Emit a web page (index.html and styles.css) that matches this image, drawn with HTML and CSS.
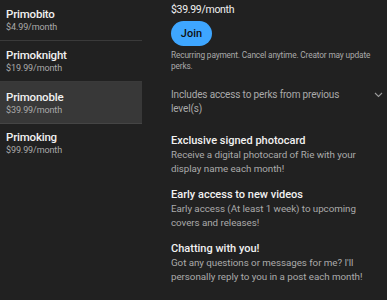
FILE: index.html
```html
<!DOCTYPE html>
<html lang="en">

<head>
	<meta charset="UTF-8">
	<title>Membership levels</title>
	<link rel="stylesheet" href="styles.css">
</head>

<body>
	<div class="page">
		<div class="levels">
			<div class="level">
				<div class="level-name">Primobito</div>
				<div class="level-price">$4.99/month</div>
			</div>
			<div class="level">
				<div class="level-name">Primoknight</div>
				<div class="level-price">$19.99/month</div>
			</div>
			<div class="level selected">
				<div class="level-name">Primonoble</div>
				<div class="level-price">$39.99/month</div>
			</div>
			<div class="level last">
				<div class="level-name">Primoking</div>
				<div class="level-price">$99.99/month</div>
			</div>
		</div>
		<div class="detail">
			<div class="price">$39.99/month</div>
			<button class="join">Join</button>
			<p class="note">Recurring payment. Cancel anytime. Creator may update perks.</p>
			<div class="previous">
				<p>Includes access to perks from previous level(s)</p>
				<svg class="chevron" width="9" height="6" viewBox="0 0 9 6">
					<path d="M1 1 L4.5 4.5 L8 1" fill="none" stroke="#9a9a9a" stroke-width="1.1"/>
				</svg>
			</div>
			<div class="perk first">
				<div class="perk-title">Exclusive signed photocard</div>
				<p class="perk-text">Receive a digital photocard of Rie with your display name each month!</p>
			</div>
			<div class="perk">
				<div class="perk-title">Early access to new videos</div>
				<p class="perk-text">Early access (At least 1 week) to upcoming covers and releases!</p>
			</div>
			<div class="perk">
				<div class="perk-title">Chatting with you!</div>
				<p class="perk-text">Got any questions or messages for me? I'll personally reply to you in a post each month!</p>
			</div>
		</div>
	</div>
</body>

</html>
```

FILE: styles.css
```css
body {
	margin: 0px;
	padding: 0px;
	overflow: hidden;
	background-color: #212121;
	font-family: Roboto, "Liberation Sans", sans-serif;
}
.page {
	display: flex;
	height: 300px;
}
.levels {
	width: 142px;
	flex-shrink: 0;
}
.level {
	padding: 7px 0 7px 6px;
	border-bottom: 1px solid #3a3a3a;
	height: 26px;
}
.level.selected {
	background-color: #383838;
	border-bottom-color: #454545;
	padding-top: 8px;
	padding-bottom: 7px;
}
.level.last {
	border-bottom: none;
	padding-top: 6px;
}
.level-name {
	font-size: 11.5px;
	font-weight: 500;
	letter-spacing: -0.2px;
	line-height: 14px;
	color: #f1f1f1;
}
.level-price {
	font-size: 9px;
	letter-spacing: -0.1px;
	line-height: 12px;
	color: #aaaaaa;
}
.detail {
	padding-left: 29px;
	width: 212px;
}
.price {
	font-size: 10.5px;
	letter-spacing: -0.3px;
	line-height: 14px;
	color: #f1f1f1;
	margin-top: 3px;
}
.join {
	display: block;
	margin-top: 4px;
	width: 41px;
	height: 25px;
	border: none;
	border-radius: 13px;
	background-color: #3ea6ff;
	color: #0f0f0f;
	font-family: inherit;
	font-size: 11px;
	font-weight: 500;
	padding: 0;
}
.note {
	margin: 4px 0 0 0;
	font-size: 8.3px;
	letter-spacing: -0.15px;
	line-height: 11px;
	color: #aaaaaa;
}
.previous {
	display: flex;
	justify-content: space-between;
	margin-top: 16px;
}
.previous p {
	margin: 0;
	font-size: 10px;
	letter-spacing: -0.15px;
	line-height: 14px;
	color: #aaaaaa;
	width: 180px;
}
.chevron {
	margin-top: 4px;
}
.perk {
	margin-top: 12px;
}
.perk.first {
	margin-top: 18px;
}
.perk-title {
	font-size: 11px;
	font-weight: 500;
	line-height: 14px;
	color: #f1f1f1;
}
.perk-text {
	margin: 0;
	font-size: 9.8px;
	letter-spacing: -0.05px;
	line-height: 14px;
	color: #aaaaaa;
	width: 195px;
}
```
